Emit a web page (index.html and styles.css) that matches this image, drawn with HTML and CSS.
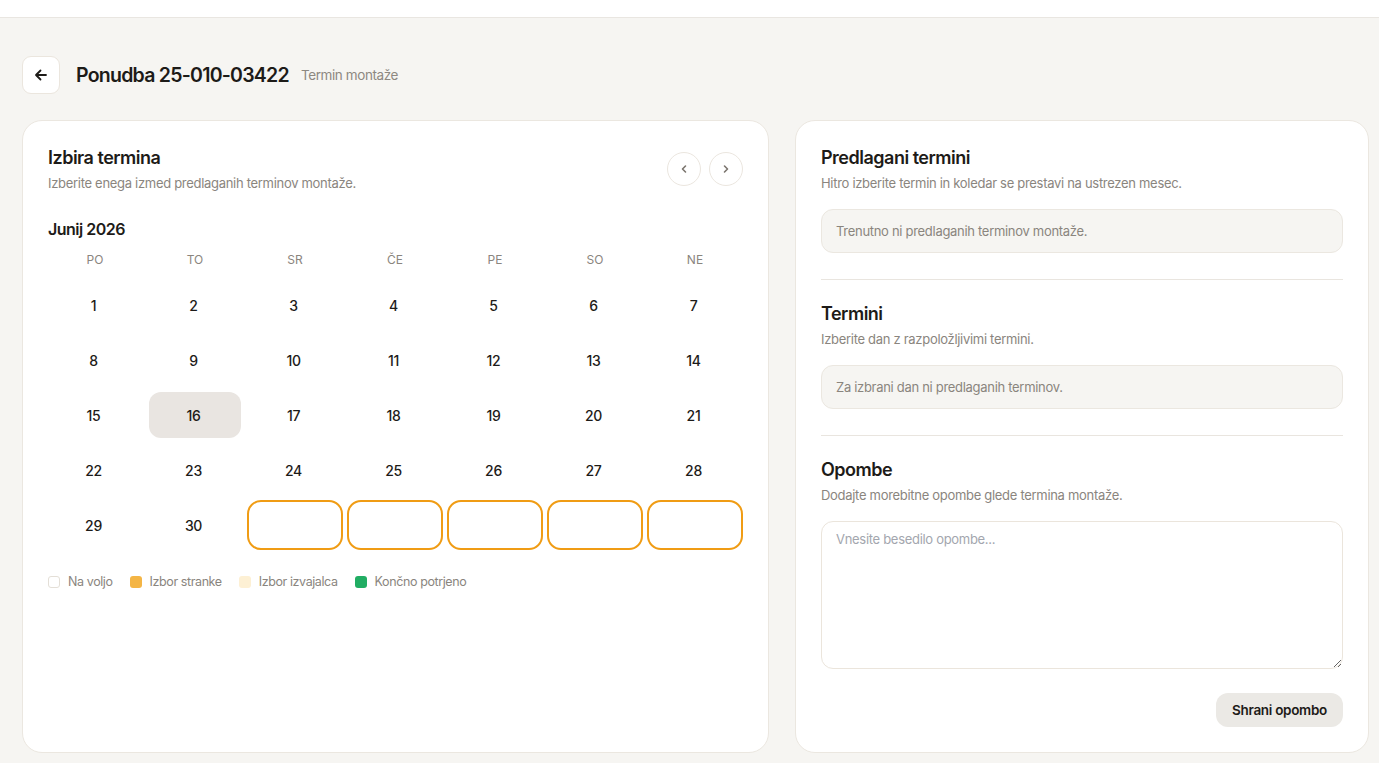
FILE: index.html
```html
<!DOCTYPE html>
<html lang="sl">
<head>
<meta charset="utf-8">
<meta name="viewport" content="width=device-width, initial-scale=1.0">
<title>Ponudba 25-010-03422 – Termin montaže</title>
<link rel="stylesheet" href="styles.css">
</head>
<body>

<div class="topbar"></div>

<main class="page">

  <header class="page-head">
    <button class="back" aria-label="Nazaj">
      <svg width="16" height="16" viewBox="0 0 16 16" fill="none" stroke="currentColor" stroke-width="1.8" stroke-linecap="round" stroke-linejoin="round"><path d="M13 8H3.5M7.5 3.5 3 8l4.5 4.5"/></svg>
    </button>
    <h1>Ponudba 25-010-03422</h1>
    <span class="crumb">Termin montaže</span>
  </header>

  <div class="cols">

    <section class="card calendar">
      <div class="card-head">
        <div>
          <h2>Izbira termina</h2>
          <p class="hint">Izberite enega izmed predlaganih terminov montaže.</p>
        </div>
        <div class="nav">
          <button class="round" aria-label="Prejšnji mesec">
            <svg width="12" height="12" viewBox="0 0 12 12" fill="none" stroke="currentColor" stroke-width="1.6" stroke-linecap="round" stroke-linejoin="round"><path d="M7.5 3 4.5 6l3 3"/></svg>
          </button>
          <button class="round" aria-label="Naslednji mesec">
            <svg width="12" height="12" viewBox="0 0 12 12" fill="none" stroke="currentColor" stroke-width="1.6" stroke-linecap="round" stroke-linejoin="round"><path d="M4.5 3l3 3-3 3"/></svg>
          </button>
        </div>
      </div>

      <h3 class="month">Junij 2026</h3>

      <div class="weekdays">
        <span>PO</span><span>TO</span><span>SR</span><span>ČE</span><span>PE</span><span>SO</span><span>NE</span>
      </div>

      <div class="days">
        <span class="day">1</span><span class="day">2</span><span class="day">3</span><span class="day">4</span><span class="day">5</span><span class="day">6</span><span class="day">7</span>
        <span class="day">8</span><span class="day">9</span><span class="day">10</span><span class="day">11</span><span class="day">12</span><span class="day">13</span><span class="day">14</span>
        <span class="day">15</span><span class="day today">16</span><span class="day">17</span><span class="day">18</span><span class="day">19</span><span class="day">20</span><span class="day">21</span>
        <span class="day">22</span><span class="day">23</span><span class="day">24</span><span class="day">25</span><span class="day">26</span><span class="day">27</span><span class="day">28</span>
        <span class="day">29</span><span class="day">30</span>
        <span class="day pad"></span><span class="day pad"></span><span class="day pad"></span><span class="day pad"></span><span class="day pad"></span>
      </div>

      <ul class="legend">
        <li><i class="sw free"></i>Na voljo</li>
        <li><i class="sw client"></i>Izbor stranke</li>
        <li><i class="sw fitter"></i>Izbor izvajalca</li>
        <li><i class="sw done"></i>Končno potrjeno</li>
      </ul>
    </section>

    <section class="card side">
      <div class="block">
        <h2>Predlagani termini</h2>
        <p class="hint">Hitro izberite termin in koledar se prestavi na ustrezen mesec.</p>
        <div class="empty">Trenutno ni predlaganih terminov montaže.</div>
      </div>

      <div class="block">
        <h2>Termini</h2>
        <p class="hint">Izberite dan z razpoložljivimi termini.</p>
        <div class="empty">Za izbrani dan ni predlaganih terminov.</div>
      </div>

      <div class="block">
        <h2>Opombe</h2>
        <p class="hint">Dodajte morebitne opombe glede termina montaže.</p>
        <textarea class="note" placeholder="Vnesite besedilo opombe..."></textarea>
        <div class="actions">
          <button class="save">Shrani opombo</button>
        </div>
      </div>
    </section>

  </div>
</main>

</body>
</html>
```

FILE: styles.css
```css
* { box-sizing: border-box; }

body {
  margin: 0; height: 763px; overflow: hidden;
  font-family: 'Inter', 'Noto Sans', sans-serif;
  background-color: #f6f5f2; color: #1d1b18;
}

button { font-family: inherit; cursor: pointer; }

.topbar {
  height: 18px; background-color: #fff;
  border-bottom: 1px solid #e9e6e1;
}

.page { padding: 38px 10px 0 22px; }

/* title row */

.page-head {
  display: flex; align-items: center; gap: 16px;
  height: 38px; margin-bottom: 26px;
}

.back {
  width: 38px; height: 38px; padding: 0;
  display: flex; align-items: center; justify-content: center;
  background-color: #fff; color: #1d1b18;
  border: 1px solid #ebe6de; border-radius: 9px;
}

.page-head h1 {
  margin: 0; font-size: 19.5px; font-weight: 600;
  letter-spacing: -0.75px;
}

.crumb { font-size: 13.5px; color: #8d8881; margin-left: -4px; letter-spacing: -0.4px; }

/* two cards */

.cols {
  display: grid; grid-template-columns: 747px 1fr; gap: 26px;
  height: 632px;
}

.card {
  background-color: #fff; border: 1px solid #ebe7e0;
  border-radius: 20px; padding: 25px 25px;
}

.card h2 {
  margin: 0; font-size: 18px; line-height: 24px; font-weight: 600;
  letter-spacing: -0.5px;
}

.hint {
  margin: 3px 0 0 0; font-size: 13px; line-height: 20px;
  color: #8a857e; letter-spacing: -0.3px;
}

/* calendar card */

.card-head { display: flex; justify-content: space-between; align-items: flex-start; }

.nav { display: flex; gap: 8px; margin-top: 6px; }

.round {
  width: 34px; height: 34px; padding: 0; border-radius: 50%;
  display: flex; align-items: center; justify-content: center;
  background-color: #fff; color: #7b756e; border: 1px solid #ebe6df;
}

.month {
  margin: 25px 0 0 0; font-size: 16px; line-height: 22px; font-weight: 600;
  letter-spacing: -0.5px;
}

.weekdays, .days {
  display: grid; grid-template-columns: repeat(7, 92px);
  column-gap: 8px; margin-left: 1px;
}

.weekdays { margin-top: 10px; }

.weekdays span {
  text-align: center; font-size: 12px; line-height: 20px;
  color: #8a857e;
}

.days { row-gap: 9px; margin-top: 12px; }

.day {
  height: 46px; border-radius: 12px;
  display: flex; align-items: center; justify-content: center;
  font-size: 14px; font-weight: 500; letter-spacing: -0.3px;
  padding-right: 3px;
}

.day.today { background-color: #e9e5e1; }

.day.pad { outline: 2px solid #f09c14; }

.legend {
  list-style: none; margin: 26px 0 0 0; padding: 0;
  display: flex; gap: 17px; font-size: 12.5px; color: #8a857e;
  letter-spacing: -0.4px;
}

.legend li { display: flex; align-items: center; gap: 8px; }

.sw { width: 12px; height: 12px; border-radius: 3px; }
.sw.free { border: 1px solid #e4dfd7; background-color: #fff; }
.sw.client { background-color: #f4b545; }
.sw.fitter { background-color: #fdf0d4; }
.sw.done { background-color: #21ad63; }

/* suggestions card */

.side { padding: 25px 25px; }

.block { padding-bottom: 26px; border-bottom: 1px solid #e9e5df; margin-bottom: 22px; }
.block:last-child { border-bottom: none; padding-bottom: 0; margin-bottom: 0; }

.empty {
  margin-top: 16px; height: 44px; padding: 0 14px;
  display: flex; align-items: center;
  background-color: #f6f5f2; border: 1px solid #ebe7e0; border-radius: 12px;
  font-size: 13px; color: #8a857e; letter-spacing: -0.3px;
}

.note {
  display: block; width: 100%; height: 148px; margin-top: 16px;
  padding: 9px 14px; resize: vertical;
  border: 1px solid #ebe5dc; border-radius: 12px; outline: none;
  font-family: inherit; font-size: 13px; color: #1d1b18;
  letter-spacing: -0.3px;
}

.note::placeholder { color: #a3a6ae; }

.actions { display: flex; justify-content: flex-end; margin-top: 24px; }

.save {
  height: 34px; padding: 0 16px; border: none; border-radius: 12px;
  background-color: #ebe9e5; color: #1d1b18;
  font-size: 13.5px; font-weight: 600; letter-spacing: -0.3px;
}
```
